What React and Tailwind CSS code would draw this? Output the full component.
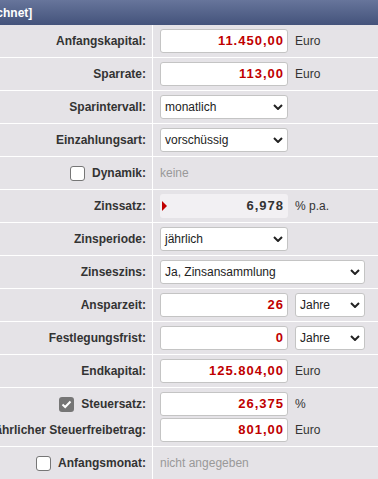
import React from "react";

const font = { fontFamily: '"Liberation Sans", Arial, sans-serif' };

function Chevron() {
  return (
    <svg width="10" height="6" viewBox="0 0 10 6" className="shrink-0">
      <polyline points="1,1 5,5 9,1" fill="none" stroke="#222" strokeWidth="2" />
    </svg>
  );
}

function Field({ value }) {
  return (
    <div className="flex h-[24px] w-[128px] items-center justify-end rounded-[3px] border border-[#c4c4c4] bg-white pr-[3px] text-[13px] font-bold tracking-[1px] text-[#c00000]">
      {value}
    </div>
  );
}

function Select({ value, w = "w-[128px]" }) {
  return (
    <div className={`flex h-[24px] ${w} items-center justify-between rounded-[3px] border border-[#c4c4c4] bg-white pl-[4px] pr-[4px] text-[12px] text-[#222]`}>
      <span>{value}</span>
      <Chevron />
    </div>
  );
}

function Box({ checked }) {
  if (checked)
    return (
      <span className="flex h-[15px] w-[15px] items-center justify-center rounded-[3px] bg-[#767676]">
        <svg width="11" height="9" viewBox="0 0 11 9">
          <polyline points="1.5,4.5 4.2,7 9.5,1.5" fill="none" stroke="#fff" strokeWidth="2" />
        </svg>
      </span>
    );
  return <span className="h-[15px] w-[15px] rounded-[3px] border border-[#767676] bg-white" />;
}

function Unit({ children }) {
  return <span className="ml-[7px] text-[12px] text-[#333]">{children}</span>;
}

function Row({ label, box, children }) {
  return (
    <div className="flex h-[33px] border-b border-white">
      <div className="flex w-[152px] shrink-0 items-center justify-end gap-[7px] whitespace-nowrap pr-[6px] text-[12px] font-bold text-[#333]">
        {box}
        <span>{label}</span>
      </div>
      <div className="flex flex-1 items-center border-l border-white pl-[7px]">{children}</div>
    </div>
  );
}

export default function App() {
  return (
    <div style={font} className="h-[479px] w-[378px] overflow-hidden bg-[#e5e3e7]">
      <div className="flex h-[25px] items-center overflow-hidden bg-gradient-to-b from-[#67759b] to-[#44537b]">
        <span className="-ml-[29px] whitespace-nowrap text-[12px] font-bold text-white">berechnet]</span>
      </div>

      <Row label="Anfangskapital:">
        <Field value="11.450,00" />
        <Unit>Euro</Unit>
      </Row>
      <Row label="Sparrate:">
        <Field value="113,00" />
        <Unit>Euro</Unit>
      </Row>
      <Row label="Sparintervall:">
        <Select value="monatlich" />
      </Row>
      <Row label="Einzahlungsart:">
        <Select value="vorschüssig" />
      </Row>
      <Row label="Dynamik:" box={<Box />}>
        <span className="text-[12px] text-[#999]">keine</span>
      </Row>
      <Row label="Zinssatz:">
        <div className="flex h-[24px] w-[128px] items-center justify-between rounded-[3px] bg-[#f2f0f3] pl-[2px] pr-[4px]">
          <svg width="5" height="10" viewBox="0 0 5 10">
            <polygon points="0,0 5,5 0,10" fill="#c00000" />
          </svg>
          <span className="text-[13px] font-bold tracking-[1px] text-[#333]">6,978</span>
        </div>
        <Unit>% p.a.</Unit>
      </Row>
      <Row label="Zinsperiode:">
        <Select value="jährlich" />
      </Row>
      <Row label="Zinseszins:">
        <Select value="Ja, Zinsansammlung" w="w-[205px]" />
      </Row>
      <Row label="Ansparzeit:">
        <Field value="26" />
        <div className="ml-[7px]">
          <Select value="Jahre" w="w-[70px]" />
        </div>
      </Row>
      <Row label="Festlegungsfrist:">
        <Field value="0" />
        <div className="ml-[7px]">
          <Select value="Jahre" w="w-[70px]" />
        </div>
      </Row>
      <Row label="Endkapital:">
        <Field value="125.804,00" />
        <Unit>Euro</Unit>
      </Row>

      <div className="flex h-[59px] border-b border-white">
        <div className="flex w-[152px] shrink-0 flex-col items-end justify-center gap-[2px] whitespace-nowrap pr-[6px] text-[12px] font-bold text-[#333]">
          <div className="flex h-[24px] items-center gap-[7px]">
            <Box checked />
            <span>Steuersatz:</span>
          </div>
          <div className="flex h-[24px] items-center">
            <span>Jährlicher Steuerfreibetrag:</span>
          </div>
        </div>
        <div className="flex flex-1 flex-col justify-center gap-[2px] border-l border-white pl-[7px]">
          <div className="flex items-center">
            <Field value="26,375" />
            <Unit>%</Unit>
          </div>
          <div className="flex items-center">
            <Field value="801,00" />
            <Unit>Euro</Unit>
          </div>
        </div>
      </div>

      <Row label="Anfangsmonat:" box={<Box />}>
        <span className="text-[12px] text-[#999]">nicht angegeben</span>
      </Row>
    </div>
  );
}
